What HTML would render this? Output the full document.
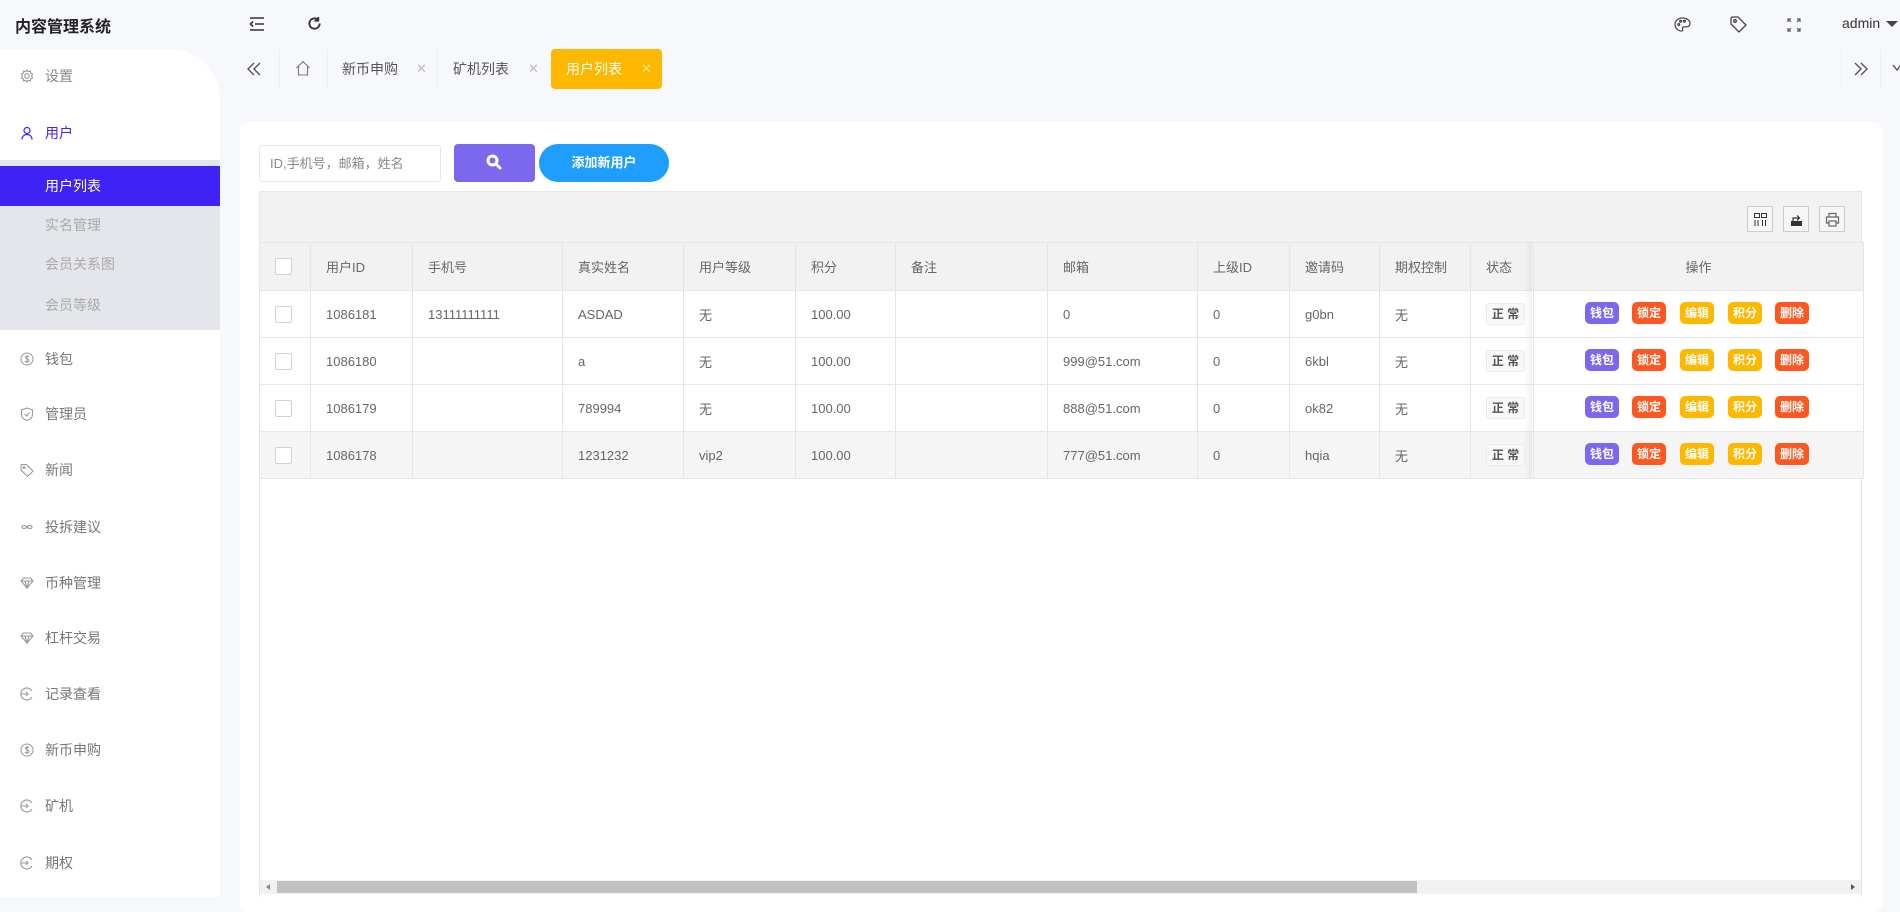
<!DOCTYPE html>
<html><head><meta charset="utf-8"><style>
*{margin:0;padding:0;box-sizing:border-box}
body{width:1900px;height:897px;overflow:hidden;background:#f7f8fc;font-family:"Liberation Sans","Noto Sans CJK SC",sans-serif;font-size:14px;color:#666;position:relative}
.a{position:absolute}
.side{left:0;top:49px;width:220px;height:848px;background:#fff;border-top-right-radius:50px}
.mi{position:absolute;left:0;width:220px;height:20px;line-height:20px;font-size:14px;color:#777}
.mi svg{position:absolute;left:20px;top:3px}
.mi span{position:absolute;left:45px}
.sub{position:absolute;left:0;top:111px;width:220px;height:170px;background:#e4e6ec}
.card{left:240px;top:122px;width:1642px;height:790px;background:#fff;border-radius:8px}
table{border-collapse:collapse;position:absolute;left:259px;top:242px;table-layout:fixed}
td{border:1px solid #e6e6e6;height:47px;padding-left:15px;font-size:13px;color:#666;white-space:nowrap;overflow:hidden}
tr.h td{background:#f2f2f2;height:48px;color:#666}
tr.g td{background:#f5f5f5}
.cb{display:inline-block;width:17px;height:17px;border:1px solid #d2d2d2;background:#fff;border-radius:2px;vertical-align:middle}
.tag{display:inline-block;width:39px;height:22px;line-height:20px;border:1px solid #e8ecf2;background:#f7f8fa;border-radius:3px;font-size:12px;font-weight:bold;color:#555;text-align:center}
.b{position:absolute;width:34px;height:22px;line-height:22px;border-radius:5px;color:#fff;font-size:12px;font-weight:bold;text-align:center}
.p{background:#7b68ee}.r{background:#ff5722}.y{background:#ffb800}
.tb{position:absolute;width:26px;height:26px;border:1px solid #ccc;background:#f6f6f6}
</style></head><body>
<div class="a" style="left:15px;top:13px;font-size:16px;font-weight:bold;color:#222">内容管理系统</div>
<svg class="a" style="left:249px;top:17px" width="16" height="14" viewBox="0 0 16 14" fill="none" stroke="#333" stroke-width="1.6"><path d="M1 1h14M6 7h9M1 13h14M4 4.5L1.5 7 4 9.5"/></svg>
<svg class="a" style="left:307px;top:16px" width="15" height="15" viewBox="0 0 16 16" fill="none" stroke="#333" stroke-width="2"><path d="M13.5 8A5.5 5.5 0 1 1 11.5 3.8"/><path d="M12 1v4h-4" /></svg>
<svg class="a" style="left:1674px;top:17px" width="17" height="15" viewBox="0 0 18 16" fill="none" stroke="#444" stroke-width="1.3"><path d="M9 1C4 1 1 4.5 1 8s3 7 7 7c1.5 0 1.5-1.5 1-2.5s0-2 1.5-2H13c2.5 0 4-1.5 4-4C17 3.5 13.5 1 9 1z"/><circle cx="5" cy="8" r="1"/><circle cx="7" cy="4.5" r="1"/><circle cx="11" cy="4.5" r="1"/></svg>
<svg class="a" style="left:1730px;top:16px" width="17" height="17" viewBox="0 0 17 17" fill="none" stroke="#444" stroke-width="1.3"><path d="M1 2v6l8 8 7-7-8-8H2z"/><circle cx="5" cy="5" r="1.3"/></svg>
<svg class="a" style="left:1787px;top:18px" width="14" height="14" viewBox="0 0 14 14" fill="none" stroke="#555" stroke-width="1.2"><path d="M1 4V1h3M10 1h3v3M13 10v3h-3M4 13H1v-3M1 1l3 3M13 1l-3 3M13 13l-3-3M1 13l3-3"/></svg>
<div class="a" style="left:1842px;top:15px;font-size:14px;color:#333">admin</div>
<div class="a" style="left:1886px;top:21px;border:6px solid transparent;border-top:6px solid #444;border-bottom:0"></div>

<div class="a side">
<div class="mi" style="top:17px;color:#888"><svg width="14" height="14" viewBox="0 0 14 14" fill="none" stroke="#999" stroke-width="1.1"><circle cx="7" cy="7" r="2.3"/><path d="M7 1l1.3 1.6 2-.5.4 2 1.8 1L11.6 7l.9 1.9-1.8 1-.4 2-2-.5L7 13l-1.3-1.6-2 .5-.4-2-1.8-1L2.4 7l-.9-1.9 1.8-1 .4-2 2 .5z"/></svg><span>设置</span></div>
<div class="mi" style="top:74px;color:#3f22f5"><svg width="14" height="14" viewBox="0 0 14 14" fill="none" stroke="#3f22f5" stroke-width="1.2"><circle cx="7" cy="4.5" r="3"/><path d="M2 13.5c0-3 2-5 5-5s5 2 5 5"/></svg><span>用户</span></div>
<div class="sub"></div>
<div class="a" style="left:0;top:117px;width:220px;height:40px;background:#3f22f5"></div>
<div class="mi" style="top:127px;color:#fff"><span>用户列表</span></div>
<div class="mi" style="top:166px;color:#aaa"><span>实名管理</span></div>
<div class="mi" style="top:205px;color:#aaa"><span>会员关系图</span></div>
<div class="mi" style="top:246px;color:#aaa"><span>会员等级</span></div>
<div class="mi" style="top:300px"><svg width="14" height="14" viewBox="0 0 14 14" fill="none" stroke="#999" stroke-width="1"><circle cx="7" cy="7" r="6"/><path d="M9 5c-.5-1-3.5-1.3-3.5.3S9 6.5 9 8.6 5.5 10 5 9M7 3v8"/></svg><span>钱包</span></div>
<div class="mi" style="top:355px"><svg width="14" height="14" viewBox="0 0 14 14" fill="none" stroke="#999" stroke-width="1.1"><path d="M7 1l5.5 2v4.5c0 3-2.5 5-5.5 6-3-1-5.5-3-5.5-6V3z"/><path d="M4.5 7l2 2 3-3.5"/></svg><span>管理员</span></div>
<div class="mi" style="top:411px"><svg width="14" height="14" viewBox="0 0 14 14" fill="none" stroke="#999" stroke-width="1.1"><path d="M1 2v5l6.5 6.5 5.5-5.5L6.5 1.5H1.5z"/><circle cx="4" cy="4.5" r="1"/></svg><span>新闻</span></div>
<div class="mi" style="top:468px"><svg width="14" height="14" viewBox="0 0 14 14" fill="none" stroke="#999" stroke-width="1.1"><path d="M7 7c-1.5-2-5-2-5 0s3.5 2 5 0 5-2 5 0-3.5 2-5 0z"/></svg><span>投拆建议</span></div>
<div class="mi" style="top:524px"><svg width="14" height="14" viewBox="0 0 14 14" fill="none" stroke="#999" stroke-width="1.1"><path d="M1 5l2.5-3h7L13 5 7 12z M1 5h12M5 5l2 7 2-7"/></svg><span>币种管理</span></div>
<div class="mi" style="top:579px"><svg width="14" height="14" viewBox="0 0 14 14" fill="none" stroke="#999" stroke-width="1.1"><path d="M1 5l2.5-3h7L13 5 7 12z M1 5h12M5 5l2 7 2-7"/></svg><span>杠杆交易</span></div>
<div class="mi" style="top:635px"><svg width="14" height="14" viewBox="0 0 14 14" fill="none" stroke="#999" stroke-width="1.1"><path d="M12 4A6 6 0 1 0 12 10M1 7h7M6 5l2 2-2 2"/></svg><span>记录查看</span></div>
<div class="mi" style="top:691px"><svg width="14" height="14" viewBox="0 0 14 14" fill="none" stroke="#999" stroke-width="1"><circle cx="7" cy="7" r="6"/><path d="M9 5c-.5-1-3.5-1.3-3.5.3S9 6.5 9 8.6 5.5 10 5 9M7 3v8"/></svg><span>新币申购</span></div>
<div class="mi" style="top:747px"><svg width="14" height="14" viewBox="0 0 14 14" fill="none" stroke="#999" stroke-width="1.1"><path d="M12 4A6 6 0 1 0 12 10M1 7h7M6 5l2 2-2 2"/></svg><span>矿机</span></div>
<div class="mi" style="top:804px"><svg width="14" height="14" viewBox="0 0 14 14" fill="none" stroke="#999" stroke-width="1.1"><path d="M12 4A6 6 0 1 0 12 10M1 7h7M6 5l2 2-2 2"/></svg><span>期权</span></div>
</div>

<!-- tabs -->
<svg class="a" style="left:246px;top:62px" width="16" height="14" viewBox="0 0 16 14" fill="none" stroke="#555" stroke-width="1.4"><path d="M8 1L2 7l6 6M14 1L8 7l6 6"/></svg>
<div class="a" style="left:279px;top:49px;width:1px;height:40px;background:#eceef2"></div>
<svg class="a" style="left:295px;top:60px" width="16" height="16" viewBox="0 0 16 16" fill="none" stroke="#777" stroke-width="1.1"><path d="M1.5 8L8 1.5 14.5 8M3.5 6.5V15h9V6.5"/></svg>
<div class="a" style="left:327px;top:49px;width:1px;height:40px;background:#eceef2"></div>
<div class="a" style="left:342px;top:59px;color:#555;font-size:14px">新币申购</div>
<div class="a" style="left:416px;top:61px;color:#bbb;font-size:13px">✕</div>
<div class="a" style="left:437px;top:49px;width:1px;height:40px;background:#eceef2"></div>
<div class="a" style="left:453px;top:59px;color:#555;font-size:14px">矿机列表</div>
<div class="a" style="left:528px;top:61px;color:#bbb;font-size:13px">✕</div>
<div class="a" style="left:551px;top:49px;width:111px;height:40px;background:#ffb800;border-radius:4px"></div>
<div class="a" style="left:566px;top:59px;color:#fff;font-size:14px">用户列表</div>
<div class="a" style="left:641px;top:61px;color:#ffe28a;font-size:13px">✕</div>
<div class="a" style="left:1841px;top:49px;width:1px;height:40px;background:#eceef2"></div>
<svg class="a" style="left:1853px;top:62px" width="16" height="14" viewBox="0 0 16 14" fill="none" stroke="#555" stroke-width="1.4"><path d="M2 1l6 6-6 6M8 1l6 6-6 6"/></svg>
<div class="a" style="left:1880px;top:49px;width:1px;height:40px;background:#eceef2"></div>
<svg class="a" style="left:1892px;top:64px" width="10" height="8" viewBox="0 0 10 8" fill="none" stroke="#555" stroke-width="1.4"><path d="M1 1l4 5 4-5"/></svg>

<div class="a card"></div>
<div class="a" style="left:259px;top:145px;width:182px;height:37px;border:1px solid #e6e6e6;border-radius:3px;background:#fff;padding-left:10px;line-height:35px;font-size:13px;color:#888">ID,手机号，邮箱，姓名</div>
<div class="a" style="left:454px;top:144px;width:81px;height:38px;background:#7b68ee;border-radius:4px"></div>
<svg class="a" style="left:485px;top:153px" width="18" height="18" viewBox="0 0 18 18"><circle cx="7.5" cy="7.5" r="6" fill="#fff"/><circle cx="7.5" cy="7.5" r="3" fill="#7b68ee"/><path d="M11 11l4 4" stroke="#fff" stroke-width="3" stroke-linecap="round"/></svg>
<div class="a" style="left:539px;top:144px;width:130px;height:38px;background:#1e9fff;border-radius:19px;color:#fff;font-weight:bold;font-size:13px;text-align:center;line-height:38px">添加新用户</div>

<div class="a" style="left:259px;top:191px;width:1603px;height:51px;background:#f2f2f2;border:1px solid #e6e6e6;border-bottom:0"></div>
<div class="tb" style="left:1747px;top:206px"><svg style="position:absolute;left:6px;top:6px" width="13" height="13" viewBox="0 0 13 13" fill="none" stroke="#333" stroke-width="1"><rect x=".5" y=".5" width="5" height="4"/><rect x="7.5" y=".5" width="5" height="4"/><path d="M1 7v6M4 7v6M8.5 7v6M11.5 7v6"/></svg></div>
<div class="tb" style="left:1783px;top:206px"><svg style="position:absolute;left:5px;top:5px" width="15" height="15" viewBox="0 0 15 15"><rect x="2" y="9" width="11" height="5" fill="#333"/><path d="M4 9V6h6M8 3.5L10.5 6 8 8.5" fill="none" stroke="#333" stroke-width="1.2"/></svg></div>
<div class="tb" style="left:1819px;top:206px"><svg style="position:absolute;left:5px;top:5px" width="15" height="15" viewBox="0 0 15 15" fill="none" stroke="#666" stroke-width="1.2"><path d="M4 5V1.5h7V5M4 11H1.5V5h12v6H11"/><rect x="4" y="9" width="7" height="5"/></svg></div>

<table>
<colgroup><col width="51"><col width="102"><col width="150"><col width="121"><col width="112"><col width="100"><col width="152"><col width="150"><col width="92"><col width="90"><col width="91"><col width="63"><col width="330"></colgroup>
<tr class="h"><td><span class="cb"></span></td><td>用户ID</td><td>手机号</td><td>真实姓名</td><td>用户等级</td><td>积分</td><td>备注</td><td>邮箱</td><td>上级ID</td><td>邀请码</td><td>期权控制</td><td>状态</td><td style="text-align:center;padding:0">操作</td></tr>
<tr><td><span class="cb"></span></td><td>1086181</td><td>13111111111</td><td>ASDAD</td><td>无</td><td>100.00</td><td></td><td>0</td><td>0</td><td>g0bn</td><td>无</td><td style="padding-left:15px"><span class="tag">正 常</span></td><td></td></tr>
<tr><td><span class="cb"></span></td><td>1086180</td><td></td><td>a</td><td>无</td><td>100.00</td><td></td><td>999@51.com</td><td>0</td><td>6kbl</td><td>无</td><td><span class="tag">正 常</span></td><td></td></tr>
<tr><td><span class="cb"></span></td><td>1086179</td><td></td><td>789994</td><td>无</td><td>100.00</td><td></td><td>888@51.com</td><td>0</td><td>ok82</td><td>无</td><td><span class="tag">正 常</span></td><td></td></tr>
<tr class="g"><td><span class="cb"></span></td><td>1086178</td><td></td><td>1231232</td><td>vip2</td><td>100.00</td><td></td><td>777@51.com</td><td>0</td><td>hqia</td><td>无</td><td><span class="tag">正 常</span></td><td></td></tr>
</table>
<div class="a" style="left:1524px;top:242px;width:8px;height:236px;background:linear-gradient(to right,rgba(0,0,0,0),rgba(0,0,0,.05))"></div>

<div class="a" style="left:0;top:0">
<div class="b p" style="left:1585px;top:302px">钱包</div><div class="b r" style="left:1632px;top:302px">锁定</div><div class="b y" style="left:1680px;top:302px">编辑</div><div class="b y" style="left:1728px;top:302px">积分</div><div class="b r" style="left:1775px;top:302px">删除</div>
<div class="b p" style="left:1585px;top:349px">钱包</div><div class="b r" style="left:1632px;top:349px">锁定</div><div class="b y" style="left:1680px;top:349px">编辑</div><div class="b y" style="left:1728px;top:349px">积分</div><div class="b r" style="left:1775px;top:349px">删除</div>
<div class="b p" style="left:1585px;top:396px">钱包</div><div class="b r" style="left:1632px;top:396px">锁定</div><div class="b y" style="left:1680px;top:396px">编辑</div><div class="b y" style="left:1728px;top:396px">积分</div><div class="b r" style="left:1775px;top:396px">删除</div>
<div class="b p" style="left:1585px;top:443px">钱包</div><div class="b r" style="left:1632px;top:443px">锁定</div><div class="b y" style="left:1680px;top:443px">编辑</div><div class="b y" style="left:1728px;top:443px">积分</div><div class="b r" style="left:1775px;top:443px">删除</div>
</div>

<div class="a" style="left:259px;top:478px;width:1px;height:419px;background:#e6e6e6"></div>
<div class="a" style="left:1861px;top:478px;width:1px;height:419px;background:#e6e6e6"></div>
<div class="a" style="left:260px;top:880px;width:1601px;height:14px;background:#f1f1f1"></div>
<div class="a" style="left:277px;top:881px;width:1140px;height:12px;background:#c1c1c1"></div>
<div class="a" style="left:266px;top:884px;border:3px solid transparent;border-right:4px solid #888;border-left:0"></div>
<div class="a" style="left:1851px;top:884px;border:3px solid transparent;border-left:4px solid #555;border-right:0"></div>
</body></html>
